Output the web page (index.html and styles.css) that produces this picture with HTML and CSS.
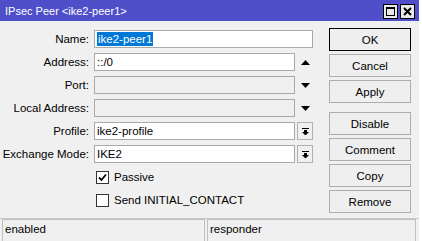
FILE: index.html
```html
<!DOCTYPE html>
<html>
<head>
<meta charset="utf-8">
<link rel="stylesheet" href="styles.css">
</head>
<body>
<div class="screen">
  <div class="window">
    <div class="titlebar">
      <span class="title">IPsec Peer &lt;ike2-peer1&gt;</span>
      <div class="wbtns">
        <span class="wbtn"><svg width="13" height="13" viewBox="0 0 13 13"><rect x="2.5" y="2.5" width="8" height="8" fill="none" stroke="#000" stroke-width="1"/><rect x="2" y="2" width="9" height="2" fill="#000"/></svg></span>
        <span class="wbtn"><svg width="13" height="13" viewBox="0 0 13 13"><path d="M3 3 L10 10 M10 3 L3 10" stroke="#000" stroke-width="2"/></svg></span>
      </div>
    </div>
    <div class="body">
      <div class="form">
        <div class="row">
          <label class="lbl">Name:</label>
          <div class="inp wide"><span class="sel">ike2-peer1</span></div>
        </div>
        <div class="row">
          <label class="lbl">Address:</label>
          <div class="inp">::/0</div>
          <span class="arrow"><svg width="9" height="5" viewBox="0 0 9 5"><polygon points="4.5,0 9,5 0,5" fill="#000"/></svg></span>
        </div>
        <div class="row">
          <label class="lbl">Port:</label>
          <div class="inp dis"></div>
          <span class="arrow"><svg width="9" height="5" viewBox="0 0 9 5"><polygon points="0,0 9,0 4.5,5" fill="#000"/></svg></span>
        </div>
        <div class="row">
          <label class="lbl">Local Address:</label>
          <div class="inp dis"></div>
          <span class="arrow"><svg width="9" height="5" viewBox="0 0 9 5"><polygon points="0,0 9,0 4.5,5" fill="#000"/></svg></span>
        </div>
        <div class="row">
          <label class="lbl">Profile:</label>
          <div class="inp">ike2-profile</div>
          <span class="dd"><svg width="7" height="7" viewBox="0 0 7 7"><rect x="0" y="0" width="7" height="1" fill="#000"/><rect x="2" y="2" width="3" height="2" fill="#000"/><polygon points="0,4 7,4 3.5,7.5" fill="#000"/></svg></span>
        </div>
        <div class="row">
          <label class="lbl">Exchange Mode:</label>
          <div class="inp">IKE2</div>
          <span class="dd"><svg width="7" height="7" viewBox="0 0 7 7"><rect x="0" y="0" width="7" height="1" fill="#000"/><rect x="2" y="2" width="3" height="2" fill="#000"/><polygon points="0,4 7,4 3.5,7.5" fill="#000"/></svg></span>
        </div>
        <div class="row chk">
          <span class="box"><svg width="9" height="9" viewBox="0 0 9 9"><path d="M1 4.5 L3.5 7 L8 1.5" fill="none" stroke="#000" stroke-width="1.8"/></svg></span>
          <span class="ctext">Passive</span>
        </div>
        <div class="row chk">
          <span class="box"></span>
          <span class="ctext">Send INITIAL_CONTACT</span>
        </div>
      </div>
      <div class="buttons">
        <button class="btn default">OK</button>
        <button class="btn">Cancel</button>
        <button class="btn">Apply</button>
        <button class="btn gap">Disable</button>
        <button class="btn">Comment</button>
        <button class="btn">Copy</button>
        <button class="btn">Remove</button>
      </div>
    </div>
    <div class="status">
      <div class="sfield first">enabled</div>
      <div class="sfield">responder</div>
    </div>
  </div>
  <div class="behind"></div>
</div>
</body>
</html>
```

FILE: styles.css
```css
* { box-sizing: border-box; }
html, body { margin: 0; padding: 0; background: #ffffff; }
body { font-family: "Liberation Sans", Arial, sans-serif; font-size: 11.5px; color: #000; }
.screen { display: flex; width: 422px; height: 241px; overflow: hidden; }
.window { width: 419px; height: 241px; background: #f0f0f0; display: flex; flex-direction: column; }
.behind { width: 3px; height: 241px; background: #ffffff; border-left: 1px solid #ffffff; }
.titlebar { height: 21px; background: #4f4fca; display: flex; align-items: center; justify-content: space-between; padding: 0 4px 0 5px; }
.title { color: #ffffff; font-size: 11px; letter-spacing: 0px; }
.wbtns { display: flex; gap: 2px; margin-top: 1px; }
.wbtn { width: 15px; height: 15px; background: #e8e8e8; border: 1px solid #000; display: flex; align-items: center; justify-content: center; }
.body { flex: 1; display: flex; }
.form { width: 329px; padding-top: 9px; display: flex; flex-direction: column; gap: 5px; }
.row { display: flex; align-items: center; height: 18px; }
.lbl { width: 94px; text-align: right; padding-right: 5px; white-space: nowrap; }
.inp { width: 201px; height: 18px; background: #fff; border: 1px solid #a9a9a9; padding: 0 2px; line-height: 16px; white-space: nowrap; overflow: hidden; }
.inp.wide { width: 219px; }
.inp.dis { background: #f0f0f0; }
.sel { background: #0078d7; color: #fff; display: inline-block; line-height: 14px; padding: 0 1px; margin-top: 1px; }
.arrow { width: 18px; display: flex; justify-content: center; padding-left: 2px; }
.dd { width: 16px; height: 18px; margin-left: 2px; border: 1px solid #b0b0b0; background: #f0f0f0; display: flex; align-items: center; justify-content: center; }
.chk { padding-left: 96px; height: 18px; }
.box { width: 13px; height: 13px; background: #fff; border: 1px solid #333; display: flex; align-items: center; justify-content: center; }
.ctext { padding-left: 5px; }
.buttons { width: 90px; padding-top: 7px; display: flex; flex-direction: column; gap: 3px; }
.btn { width: 82px; height: 23px; font-family: inherit; font-size: 11.5px; background: #efefef; border: 1px solid #adadad; color: #000; padding: 0; }
.btn.default { border: 1px solid #000; }
.btn.gap { margin-top: 6px; }
.status { height: 23px; display: flex; gap: 2px; padding: 0 3px 0 2px; border-top: 1px solid #c8c8c8; margin-top: 0; }
.sfield { flex: 1; border: 1px solid #c0c0c0; border-bottom: none; padding: 3px 2px 0; }
.sfield.first { flex: 0 0 203px; }
```
